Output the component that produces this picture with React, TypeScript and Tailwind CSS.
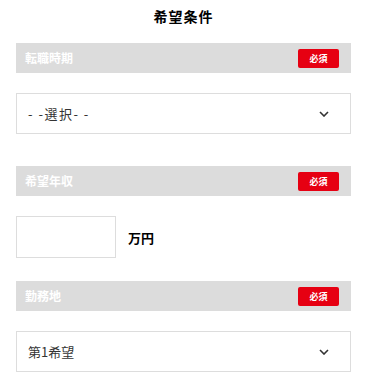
import React, { FC } from "react";

const font = "font-['Noto_Sans_CJK_JP','Noto_Sans',sans-serif]";

const SectionBar: FC<{ label: string }> = ({ label }) => (
  <div className="flex h-[30px] items-center justify-between bg-[#dcdcdc] pl-[9px] pr-[12px]">
    <span className="text-[12px] font-bold leading-none text-white">{label}</span>
    <span className="flex h-[19px] w-[41px] items-center justify-center rounded-[2px] bg-[#e60012] text-[9px] font-bold leading-none text-white">
      必須
    </span>
  </div>
);

const Chevron: FC = () => (
  <svg width="10" height="6" viewBox="0 0 10 6" fill="none">
    <path d="M1 1l4 4 4-4" stroke="#333" strokeWidth="1.6" />
  </svg>
);

const SelectBox: FC<{ value: string; spaced?: boolean }> = ({ value, spaced }) => (
  <div className="flex h-[41px] items-center justify-between border border-[#dddddd] bg-white pl-[11px] pr-[21px]">
    <span
      className={
        spaced
          ? "text-[13px] leading-none tracking-[1.5px] text-[#333]"
          : "text-[13px] leading-none text-[#333]"
      }
    >
      {value}
    </span>
    <Chevron />
  </div>
);

const App: FC = () => {
  return (
    <div className={`${font} w-[367px] bg-white px-[16px] pt-[6px]`}>
      <h2 className="text-center text-[14px] font-bold leading-[20px] tracking-[1px] text-black">
        希望条件
      </h2>
      <div className="mt-[17px]">
        <SectionBar label="転職時期" />
        <div className="mt-[20px]">
          <SelectBox value="- -選択- -" spaced />
        </div>
      </div>
      <div className="mt-[32px]">
        <SectionBar label="希望年収" />
        <div className="mt-[20px] flex items-center gap-[12px]">
          <div className="h-[42px] w-[100px] border border-[#dddddd] bg-white" />
          <span className="text-[13px] font-bold leading-none text-black">万円</span>
        </div>
      </div>
      <div className="mt-[23px]">
        <SectionBar label="勤務地" />
        <div className="mt-[20px]">
          <SelectBox value="第1希望" />
        </div>
      </div>
    </div>
  );
};

export default App;
